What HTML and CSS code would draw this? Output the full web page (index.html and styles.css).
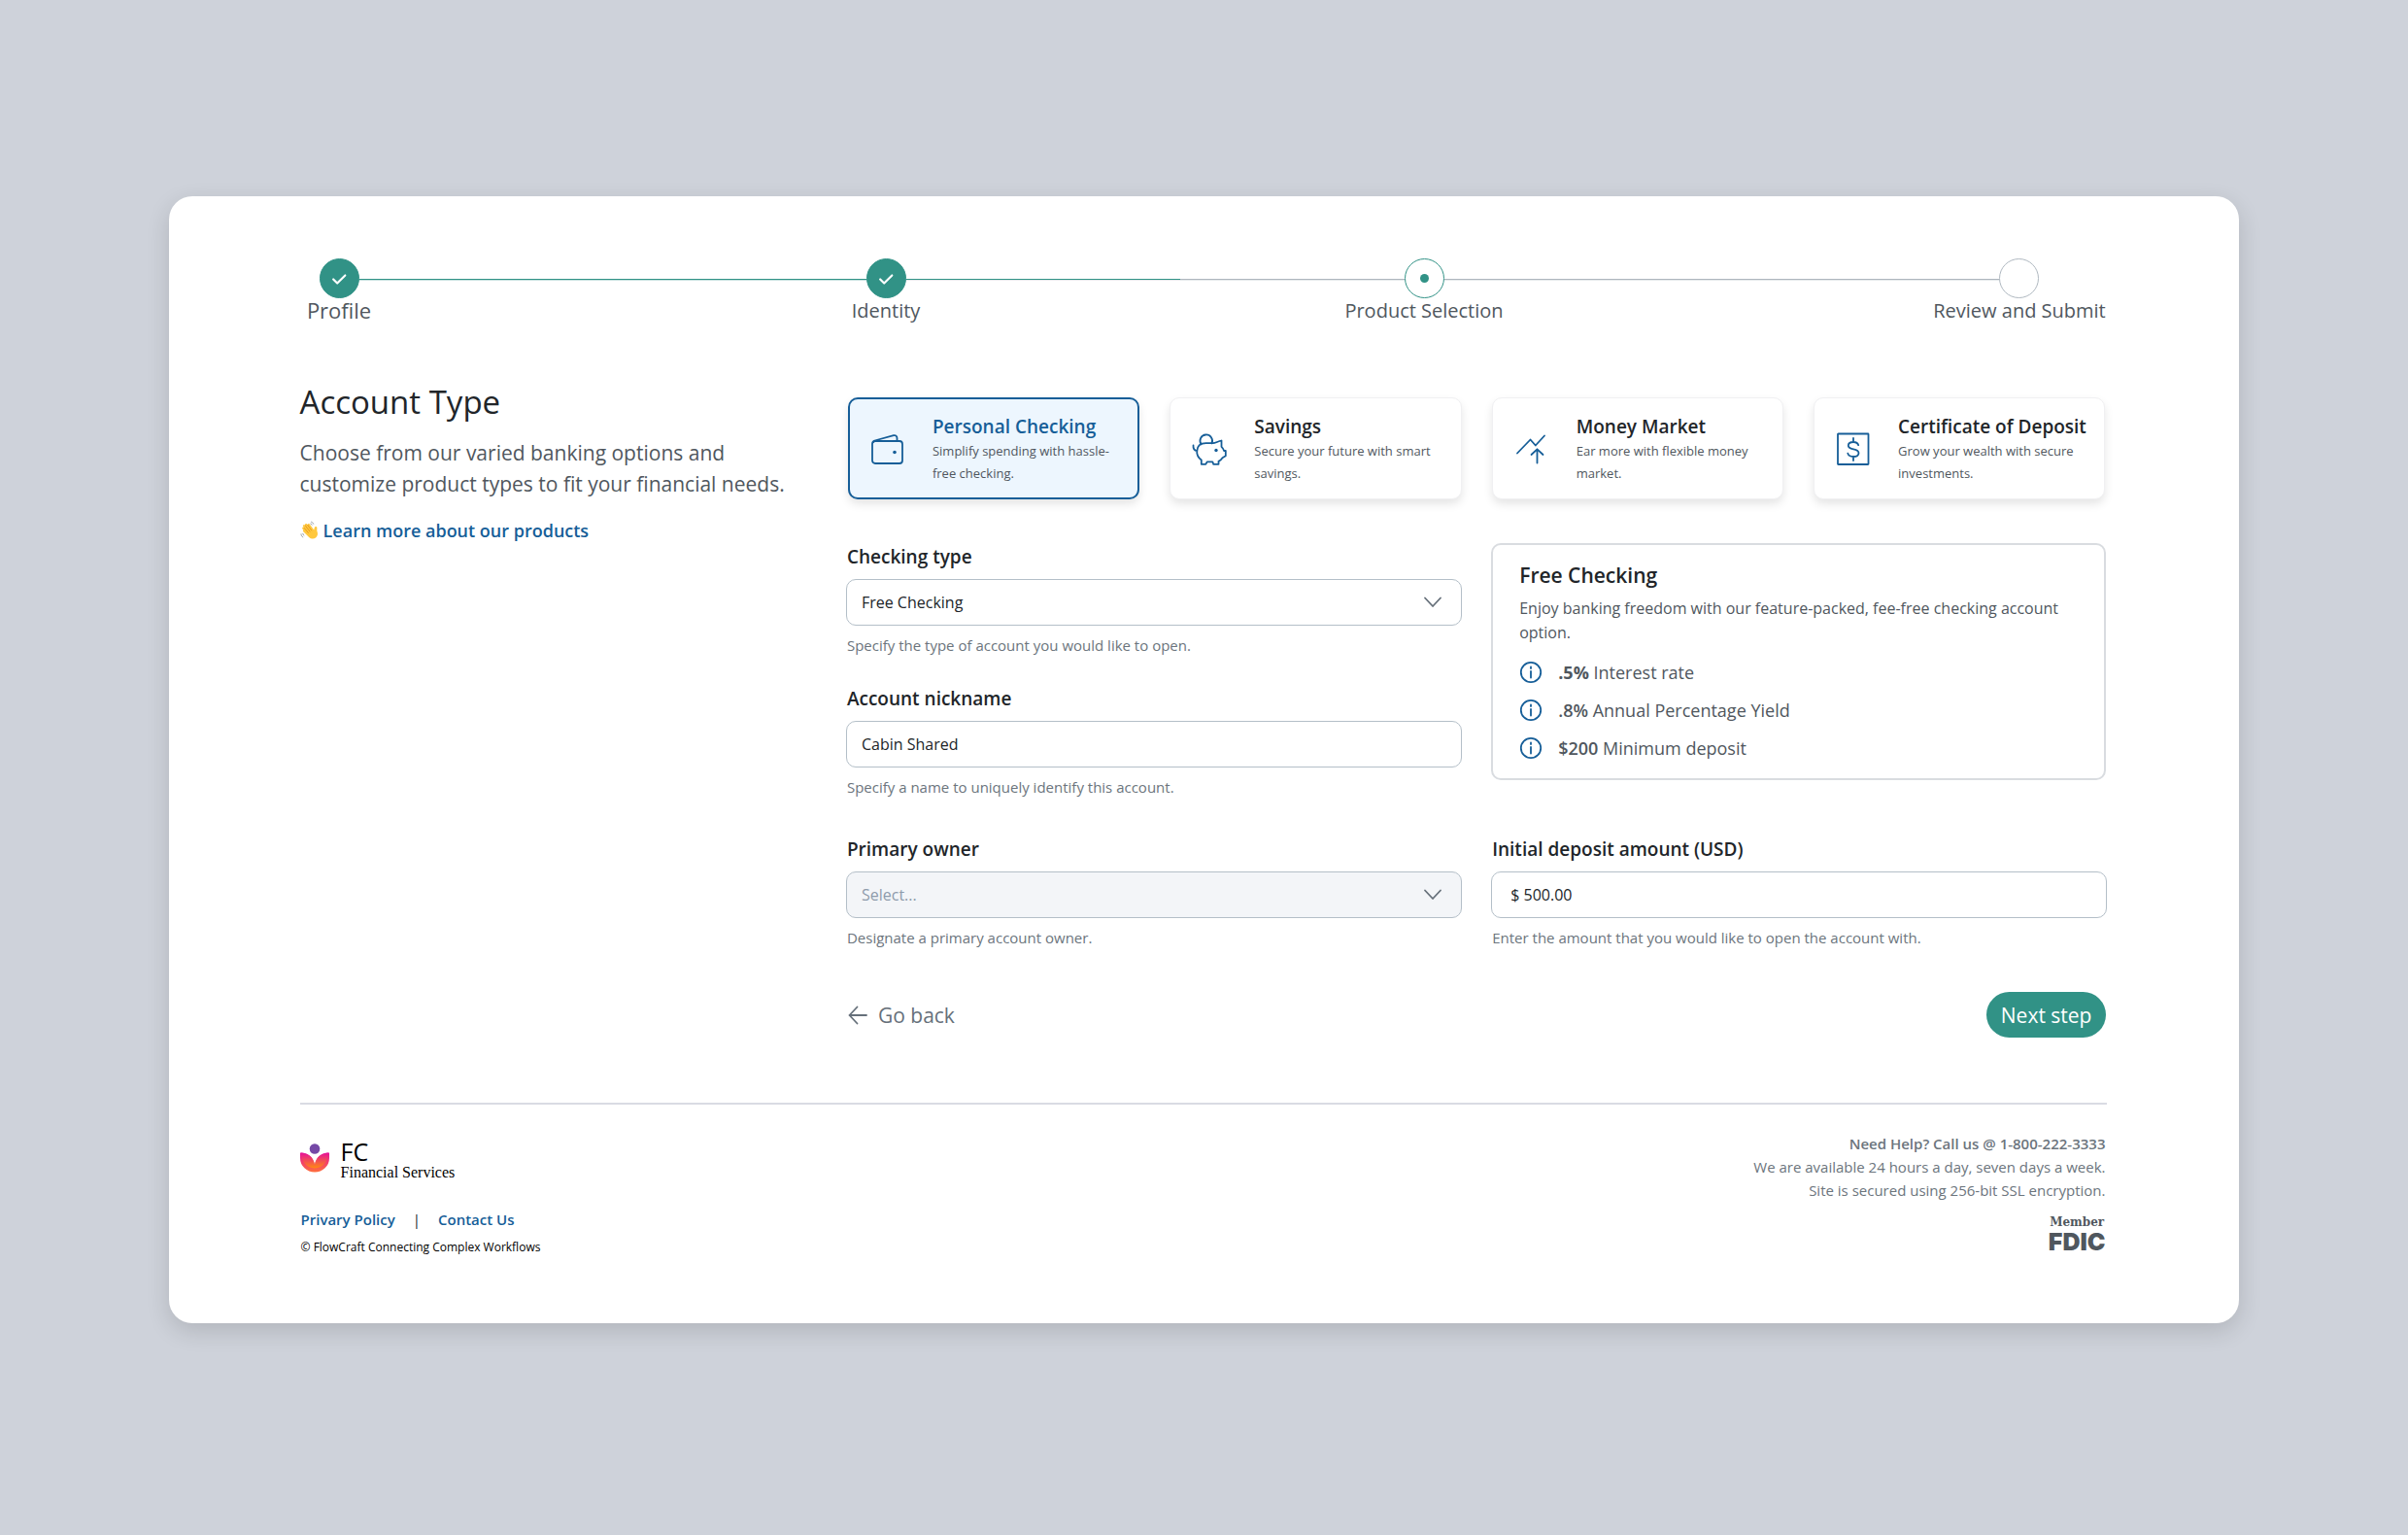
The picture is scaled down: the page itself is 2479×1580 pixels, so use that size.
FILE: index.html
```html
<!DOCTYPE html>
<html lang="en">
<head>
    <meta charset="UTF-8" />
    <meta name="viewport" content="width=device-width, initial-scale=1.0" />
    <title>Account Type - FC Financial Services</title>
    <link rel="stylesheet" href="styles.css">
</head>
<body>
    <div class="page">
        <ol class="stepper">
            <li class="step done">
                <span class="dot">
                    <svg viewBox="0 0 20 20"><path d="M3.5 10.5 8 15 17 6" /></svg>
                </span>
                <span class="step-label step-first">Profile</span>
            </li>
            <li class="line line-1 filled"></li>
            <li class="step done">
                <span class="dot">
                    <svg viewBox="0 0 20 20"><path d="M3.5 10.5 8 15 17 6" /></svg>
                </span>
                <span class="step-label">Identity</span>
            </li>
            <li class="line line-2 half"></li>
            <li class="step current" aria-current="step">
                <span class="dot"></span>
                <span class="step-label">Product Selection</span>
            </li>
            <li class="line line-3"></li>
            <li class="step">
                <span class="dot"></span>
                <span class="step-label">Review and Submit</span>
            </li>
        </ol>

        <main class="content">
            <section class="intro">
                <h1>Account Type</h1>
                <p>Choose from our varied banking options and customize product types to fit your financial needs.</p>
                <a class="learn-more" href="#">
                    <svg class="wave" viewBox="0 0 20 20">
                        <path class="hand" d="M3.500 9.800 2.300 8.200c-.7-1.100.7-2 1.500-1L3 5.800c-.7-1.300.8-2.200 1.700-1.100l.4-.5c-.3-1.200 1.200-1.800 1.900-.8l.8.900c-.1-1.200 1.300-1.700 2-.7l4.400 6 .6-2.500c.4-1.700 2.700-1.300 2.600.4l-.1 2.700c.3 1.400 1 2.600.6 4.200-.7 2.700-2.900 4.300-5.400 4.100-2.200-.1-3.600-1.300-4.900-2.900L3.300 11.300c-.7-.9-.4-1.500.2-1.500z" />
                        <path class="fingers" d="m4.200 7.500 4.200 5M5.200 4.800l4.800 6.300M7.600 4.200l4.100 5.700" />
                        <path class="motion" d="M11.500 1.200c1 .3 1.800 1 2.200 2M10.800 3c.7.2 1.100.6 1.300 1.200M1 13.800c0 1.300.7 2.500 1.800 3.100M2.800 13.400c.1.8.5 1.400 1.100 1.800" />
                    </svg>
                    Learn more about our products
                </a>
            </section>

            <form class="account-form">
                <div class="products">
                    <label class="product selected">
                        <input type="radio" name="product" checked />
                        <svg class="product-icon" viewBox="0 0 36 36">
                            <rect x="2" y="10" width="31" height="23" rx="3" />
                            <path d="M3 11 4.500 9.500 24 4.200c2-.5 3.500.8 3.500 2.800v3" />
                            <circle class="fill" cx="25" cy="21.500" r="1.800" />
                        </svg>
                        <span class="product-text">
                            <span class="product-title">Personal Checking</span>
                            <span class="product-desc">Simplify spending with hassle-free checking.</span>
                        </span>
                    </label>
                    <label class="product">
                        <input type="radio" name="product" />
                        <svg class="product-icon" viewBox="0 0 36 36">
                            <path d="M9.500 13.200a6.300 6.300 0 1 1 11-.8" />
                            <path d="M1.500 14.500c-.3 3 1 5.200 4 5.600M5.200 20.500c.3-5.500 4-8.300 9.300-8.300h7.300c2-.2 5-1.700 8.700-2.700v6.300c1.400 1.300 2.200 2.600 2.600 4.200h1.700v5.200l-3.300 2c-1 1.600-2.300 2.800-4 3.700v2.900h-5.200l-1-2.400h-5.600l-1.400 2.400H9.800v-4.300c-3.200-2.400-4.800-5.400-4.600-9z" />
                            <circle class="fill" cx="25" cy="19.500" r="1.700" />
                        </svg>
                        <span class="product-text">
                            <span class="product-title">Savings</span>
                            <span class="product-desc">Secure your future with smart savings.</span>
                        </span>
                    </label>
                    <label class="product">
                        <input type="radio" name="product" />
                        <svg class="product-icon" viewBox="0 0 36 36">
                            <path d="M3 22.500 16.500 8.500l5.300 6L31 4.500M23.500 32.500v-14M17.500 24l6-5.700 6 5.700" />
                        </svg>
                        <span class="product-text">
                            <span class="product-title">Money Market</span>
                            <span class="product-desc">Ear more with flexible money market.</span>
                        </span>
                    </label>
                    <label class="product">
                        <input type="radio" name="product" />
                        <svg class="product-icon" viewBox="0 0 36 36">
                            <rect x="2" y="2.500" width="31.500" height="31.500" rx="0.500" />
                            <path d="M18 7v4M18 26v4M23.200 14.200c-.5-2-2.600-3.200-5.200-3.200-3 0-5.200 1.400-5.200 3.700 0 5 10.700 2.300 10.700 7.500 0 2.400-2.300 3.800-5.500 3.800-2.900 0-5.200-1.300-5.700-3.400" />
                        </svg>
                        <span class="product-text">
                            <span class="product-title">Certificate of Deposit</span>
                            <span class="product-desc">Grow your wealth with secure investments.</span>
                        </span>
                    </label>
                </div>

                <div class="fields">
                    <div class="field-stack">
                        <div class="field">
                            <label for="checkingType">Checking type</label>
                            <div class="select-wrap">
                                <select id="checkingType" aria-describedby="checkingTypeHelp">
                                    <option>Free Checking</option>
                                </select>
                                <svg class="chevron" viewBox="0 0 20 20"><path d="m2 5.500 8 8.500 8-8.500" /></svg>
                            </div>
                            <p class="help" id="checkingTypeHelp">Specify the type of account you would like to open.</p>
                        </div>
                        <div class="field">
                            <label for="nickname">Account nickname</label>
                            <input type="text" id="nickname" value="Cabin Shared" aria-describedby="nicknameHelp" />
                            <p class="help" id="nicknameHelp">Specify a name to uniquely identify this account.</p>
                        </div>
                    </div>

                    <aside class="summary">
                        <h2>Free Checking</h2>
                        <p>Enjoy banking freedom with our feature-packed, fee-free checking account option.</p>
                        <ul>
                            <li>
                                <svg class="info" viewBox="0 0 24 24"><circle cx="12" cy="12" r="10.200" /><path d="M12 11v6.500M12 6.500v1.500" /></svg>
                                <span><b>.5%</b> Interest rate</span>
                            </li>
                            <li>
                                <svg class="info" viewBox="0 0 24 24"><circle cx="12" cy="12" r="10.200" /><path d="M12 11v6.500M12 6.500v1.500" /></svg>
                                <span><b class="medium">.8%</b> Annual Percentage Yield</span>
                            </li>
                            <li>
                                <svg class="info" viewBox="0 0 24 24"><circle cx="12" cy="12" r="10.200" /><path d="M12 11v6.500M12 6.500v1.500" /></svg>
                                <span><b class="medium">$200</b> Minimum deposit</span>
                            </li>
                        </ul>
                    </aside>

                    <div class="field">
                        <label for="owner">Primary owner</label>
                        <div class="select-wrap">
                            <select id="owner" disabled aria-describedby="ownerHelp">
                                <option>Select...</option>
                            </select>
                            <svg class="chevron" viewBox="0 0 20 20"><path d="m2 5.500 8 8.500 8-8.500" /></svg>
                        </div>
                        <p class="help" id="ownerHelp">Designate a primary account owner.</p>
                    </div>

                    <div class="field">
                        <label for="deposit">Initial deposit amount (USD)</label>
                        <input type="text" id="deposit" class="amount" value="$ 500.00" aria-describedby="depositHelp" />
                        <p class="help" id="depositHelp">Enter the amount that you would like to open the account with.</p>
                    </div>
                </div>

                <div class="actions">
                    <button type="button" class="back">
                        <svg viewBox="0 0 20 20"><path d="M19 10H1.500M9.500 1.500 1.500 10l8 8.500" /></svg>
                        Go back
                    </button>
                    <button type="submit" class="next">Next step</button>
                </div>
            </form>
        </main>

        <footer class="footer">
            <div class="footer-left">
                <div class="brand">
                    <svg class="logo" viewBox="0 0 30 30">
                        <defs>
                            <linearGradient id="petal" x1="0" y1="0" x2="0" y2="1">
                                <stop offset="0" stop-color="#e5109b" />
                                <stop offset="1" stop-color="#ff8a12" />
                            </linearGradient>
                            <linearGradient id="bowl" x1="0" y1="0" x2="0" y2="1">
                                <stop offset="0" stop-color="#e5109b" />
                                <stop offset="1" stop-color="#ff6f3c" />
                            </linearGradient>
                        </defs>
                        <circle cx="15" cy="5.500" r="5.300" fill="#7549a6" />
                        <path d="M0 9.500C7 9.500 13 13 15 22c2-9 8-12.500 15-12.500v5.500a15 14.500 0 0 1-30 0z" fill="url(#bowl)" />
                        <path d="M1 9.600C8 10 14 14 15 22c1-8 7-12 14-12.400C29 18 24 25.500 15 25.500S1 18 1 9.600z" fill="url(#petal)" />
                    </svg>
                    <div class="brand-name">
                        <span class="brand-short">FC</span>
                        <span class="brand-long">Financial Services</span>
                    </div>
                </div>
                <nav class="footer-links">
                    <a href="#">Privary Policy</a>
                    <span>|</span>
                    <a href="#">Contact Us</a>
                </nav>
                <p class="copyright">© FlowCraft Connecting Complex Workflows</p>
            </div>
            <div class="footer-right">
                <p class="phone">Need Help? Call us @ 1-800-222-3333</p>
                <p>We are available 24 hours a day, seven days a week.</p>
                <p>Site is secured using 256-bit SSL encryption.</p>
                <div class="fdic">
                    <span class="fdic-member">Member</span>
                    <span class="fdic-name">FDIC</span>
                </div>
            </div>
        </footer>
    </div>
</body>
</html>
```
FILE: styles.css
```css
* {
    margin: 0;
    padding: 0;
    box-sizing: border-box;
}

body {
    background-color: #ced2da;
    font-family: "Open Sans", sans-serif;
    color: #212529;
}

a {
    color: #165e98;
    font-weight: 600;
    text-decoration: none;
}

button, input, select {
    font-family: inherit;
}

svg {
    fill: none;
    stroke-linecap: round;
    stroke-linejoin: round;
}

.page {
    width: 86%;
    margin: 202px auto;
    padding: 64px 136px 68px 135px;
    background-color: white;
    border-radius: 24px;
    box-shadow: 0 8px 24px rgba(0, 0, 0, 0.14);
}

/* Stepper */
.stepper {
    display: flex;
    list-style: none;
    padding: 0 70px 0 20px;
}

.step {
    display: flex;
    flex-direction: column;
    align-items: center;
    width: 41px;
}

.dot {
    display: flex;
    justify-content: center;
    align-items: center;
    width: 41px;
    height: 41px;
    flex-shrink: 0;
    border: 1px solid #b0b9c1;
    border-radius: 50%;
}

.dot svg {
    width: 18px;
    height: 18px;
    stroke: white;
    stroke-width: 2.4;
}

.done .dot {
    background-color: #319286;
    border-color: #319286;
}

.current .dot {
    border-color: #319286;
}

.current .dot::after {
    content: "";
    width: 9px;
    height: 9px;
    border-radius: 50%;
    background-color: #319286;
}

.step-label {
    font-size: 20px;
    line-height: 26px;
    color: #50575e;
    white-space: nowrap;
}

.step-first {
    font-size: 22px;
    line-height: 24px;
}

.line {
    height: 1px;
    margin-top: 21px;
    background-color: #aeb6be;
    box-shadow: 0 1px #e6eaec;
}

.line-1 { flex: 522; }
.line-2 { flex: 513; }
.line-3 { flex: 572; }

.filled {
    background-color: #319286;
    box-shadow: 0 1px #c5e1de;
}

.half {
    background-image: linear-gradient(to right, #319286 55%, #aeb6be 55%);
}

/* Main content */
.content {
    display: grid;
    grid-template-columns: 2fr 5fr;
    gap: 43px;
    margin-top: 59px;
}

.intro h1 {
    font-size: 33px;
    font-weight: 400;
    line-height: 44px;
}

.intro p {
    margin-top: 14px;
    font-size: 21px;
    line-height: 32px;
    color: #50575e;
}

.learn-more {
    display: flex;
    align-items: center;
    gap: 4px;
    margin-top: 18px;
    font-size: 18px;
    line-height: 28px;
}

.wave {
    width: 20px;
    height: 20px;
}

.wave .hand {
    fill: #ffc83d;
}

.wave .fingers {
    stroke: #e08f1a;
    stroke-width: 0.8;
}

.wave .motion {
    stroke: #7d8790;
    stroke-width: 0.8;
}

.products {
    display: grid;
    grid-template-columns: repeat(4, 1fr);
    gap: 31px;
    margin-top: 17px;
    padding: 0 2px;
}

.product {
    position: relative;
    display: flex;
    align-items: center;
    min-height: 105px;
    padding: 0 8px 0 22px;
    border: 1px solid #f0f0f2;
    border-radius: 10px;
    background-color: white;
    box-shadow: 0 5px 10px rgba(0, 0, 0, 0.1);
    cursor: pointer;
}

.product input {
    position: absolute;
    opacity: 0;
}

.product.selected {
    padding: 0 7px 0 21px;
    border: 2px solid #165e98;
    background-color: #edf6fe;
}

.product-icon {
    width: 36px;
    height: 36px;
    flex-shrink: 0;
    stroke: #165e98;
    stroke-width: 1.8;
}

.product-icon .fill {
    fill: #165e98;
    stroke: none;
}

.product-text {
    display: flex;
    flex-direction: column;
    margin-left: 28px;
}

.product-title {
    font-size: 19px;
    font-weight: 600;
    line-height: 28px;
}

.selected .product-title {
    color: #165e98;
}

.product-desc {
    max-width: 185px;
    font-size: 13px;
    line-height: 23px;
    color: #50575e;
}

.fields {
    display: grid;
    grid-template-columns: 1fr 1fr;
    gap: 38px 30px;
    margin-top: 45px;
}

.field-stack {
    display: flex;
    flex-direction: column;
    gap: 29px;
}

.field {
    display: flex;
    flex-direction: column;
}

.field label {
    padding-left: 1px;
    font-size: 19px;
    font-weight: 600;
    line-height: 28px;
}

.field input,
.field select {
    width: 100%;
    height: 48px;
    padding: 0 15px;
    border: 1px solid #b4bfc8;
    border-radius: 10px;
    background-color: white;
    color: #212529;
    font-size: 16px;
    appearance: none;
}

.field > input,
.select-wrap {
    margin-top: 9px;
}

.field .amount {
    padding: 0 19px;
}

.field select:disabled {
    background-color: #f3f5f8;
    color: #8e9bab;
    opacity: 1;
}

.select-wrap {
    display: grid;
    align-items: center;
}

.select-wrap > * {
    grid-area: 1 / 1;
}

.chevron {
    justify-self: end;
    width: 20px;
    height: 20px;
    margin-right: 20px;
    stroke: #66707a;
    stroke-width: 1.8;
    pointer-events: none;
}

.help {
    margin-top: 8px;
    padding-left: 1px;
    font-size: 15px;
    line-height: 24px;
    color: #6c757d;
}

.summary {
    align-self: start;
    min-height: 244px;
    margin-right: 1px;
    padding: 15px 27px 14px;
    border: 2px solid #d9dce0;
    border-radius: 10px;
    color: #50575e;
}

.summary h2 {
    font-size: 21px;
    font-weight: 600;
    line-height: 32px;
    color: #212529;
}

.summary p {
    margin-top: 6px;
    font-size: 16px;
    line-height: 25px;
}

.summary ul {
    display: flex;
    flex-direction: column;
    gap: 11px;
    margin-top: 14px;
    list-style: none;
}

.summary li {
    display: flex;
    align-items: center;
    gap: 16px;
    font-size: 18px;
    line-height: 28px;
}

.summary .medium {
    font-weight: 600;
}

.info {
    width: 24px;
    height: 24px;
    stroke: #165e98;
    stroke-width: 1.8;
}

.actions {
    display: flex;
    justify-content: space-between;
    align-items: center;
    margin-top: 44px;
    padding-right: 1px;
}

.actions button {
    height: 47px;
    border: none;
    font-size: 21px;
    cursor: pointer;
}

.back {
    display: flex;
    align-items: center;
    gap: 11px;
    padding: 0 2px;
    background: transparent;
    color: #66707a;
}

.back svg {
    width: 20px;
    height: 20px;
    stroke: #66707a;
    stroke-width: 1.8;
}

.next {
    padding: 0 15px;
    border-radius: 24px;
    background-color: #319286;
    color: white;
}

/* Footer */
.footer {
    display: flex;
    justify-content: space-between;
    margin-top: 67px;
    border-top: 2px solid #d9dbe3;
}

.brand {
    display: flex;
    gap: 12px;
    margin-top: 36px;
}

.logo {
    width: 30px;
    height: 30px;
    margin-top: 4px;
}

.brand-name {
    display: flex;
    flex-direction: column;
    color: black;
}

.brand-short {
    font-size: 25px;
    line-height: 24px;
}

.brand-long {
    font-family: "Liberation Serif", serif;
    font-size: 16px;
    line-height: 20px;
}

.footer-links {
    display: flex;
    gap: 18px;
    margin-top: 26px;
    padding-left: 1px;
    font-size: 15px;
    line-height: 24px;
}

.copyright {
    margin-top: 7px;
    padding-left: 1px;
    font-size: 12px;
    line-height: 20px;
    color: black;
}

.footer-right {
    display: flex;
    flex-direction: column;
    align-items: flex-end;
    padding: 28px 2px 0 0;
    font-size: 15px;
    line-height: 24px;
    color: #6c757d;
}

.phone {
    font-weight: 600;
}

.fdic {
    display: flex;
    flex-direction: column;
    align-items: center;
    margin-top: 14px;
    color: #50575e;
}

.fdic-member {
    font-family: "DejaVu Serif", serif;
    font-size: 12px;
    font-weight: bold;
    line-height: 14px;
}

.fdic-name {
    font-family: Inter, sans-serif;
    font-size: 25px;
    font-weight: 900;
    line-height: 26px;
}
```
